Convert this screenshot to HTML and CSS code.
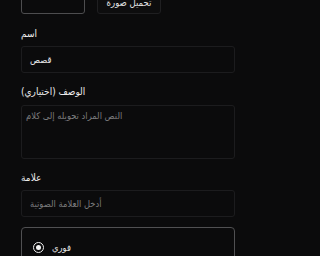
FILE: index.html
```html
<!DOCTYPE html>
<html lang="ar">
<head>
<meta charset="utf-8">
<link rel="stylesheet" href="styles.css">
</head>
<body>
<div class="page">
  <div class="top-row">
    <div class="preview"></div>
    <button class="upload">تحميل صورة</button>
  </div>
  <label class="label l-name">اسم</label>
  <div class="input"><span class="value">قصص</span></div>
  <label class="label l-desc">الوصف (اختياري)</label>
  <div class="textarea"><span class="ph">النص المراد تحويله إلى كلام</span></div>
  <label class="label l-tag">علامة</label>
  <div class="input"><span class="ph">أدخل العلامة الصوتية</span></div>
  <div class="card">
    <div class="option"><span class="radio"></span><span class="opt-text">فوري</span></div>
  </div>
</div>
</body>
</html>
```
FILE: styles.css
```css
html, body {
  margin: 0;
  padding: 0;
  background: #0b0b0c;
  height: 256px;
  overflow: hidden;
}
body {
  font-family: "DejaVu Sans Condensed", "DejaVu Sans", sans-serif;
  font-size: 9.3px;
  color: #e6e6e6;
}
.page {
  width: 214px;
  margin-left: 21px;
  display: flex;
  flex-direction: column;
}
.top-row {
  height: 14px;
  display: flex;
  align-items: flex-end;
  gap: 12px;
}
.preview {
  flex: 0 0 64px;
  height: 60px;
  box-sizing: border-box;
  border: 1px solid #4d4d4f;
  border-radius: 3px;
  background: #0b0b0c;
}
.upload {
  flex: 0 0 64px;
  height: 24px;
  box-sizing: border-box;
  border: 1px solid #1f1f21;
  border-radius: 3px;
  background: #0d0d0e;
  color: #e4e4e4;
  font-family: "DejaVu Sans Condensed", "DejaVu Sans", sans-serif;
  font-size: 9.5px;
  padding: 0;
  line-height: 19px;
  text-align: center;
}
.label {
  display: block;
  font-size: 10px;
  line-height: 14px;
  color: #ececec;
}
.l-name { margin-top: 13px; }
.l-desc { margin-top: 12px; }
.l-tag { margin-top: 12px; }
.input {
  margin-top: 5px;
  height: 27px;
  box-sizing: border-box;
  border: 1px solid #1c1c1e;
  border-radius: 3px;
  display: flex;
  align-items: center;
  padding: 0 8px;
}
.textarea {
  margin-top: 6px;
  height: 54px;
  box-sizing: border-box;
  border: 1px solid #1c1c1e;
  border-radius: 3px;
  padding: 3px 4px;
  line-height: 14px;
}
.value { color: #ececec; }
.ph { color: #7c7c7e; }
.card {
  margin-top: 10px;
  height: 60px;
  box-sizing: border-box;
  border: 1px solid #505052;
  border-radius: 4px;
  padding: 14px 11px;
}
.option {
  display: flex;
  align-items: center;
  gap: 8px;
}
.radio {
  width: 11px;
  height: 11px;
  box-sizing: border-box;
  border: 1.5px solid #f0f0f0;
  border-radius: 50%;
  display: flex;
  align-items: center;
  justify-content: center;
}
.radio::after {
  content: "";
  width: 5px;
  height: 5px;
  border-radius: 50%;
  background: #f5f5f5;
}
.opt-text {
  color: #e8e8e8;
  line-height: 11px;
}
```
